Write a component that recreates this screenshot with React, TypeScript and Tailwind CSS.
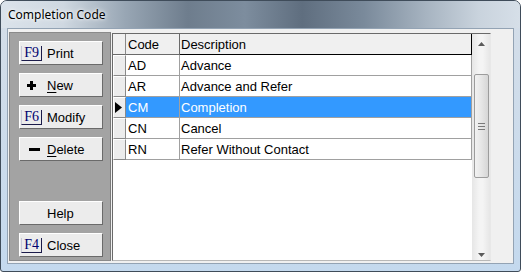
import React from 'react';

interface CodeRow {
  code: string;
  desc: string;
  selected?: boolean;
}

const rows: CodeRow[] = [
  { code: 'AD', desc: 'Advance' },
  { code: 'AR', desc: 'Advance and Refer' },
  { code: 'CM', desc: 'Completion', selected: true },
  { code: 'CN', desc: 'Cancel' },
  { code: 'RN', desc: 'Refer Without Contact' },
];

function KeyBox({ k }: { k: string }) {
  return (
    <span className="flex h-[15px] w-[21px] items-end justify-end border-r border-b border-l border-r-[#1b1b4a] border-b-[#1b1b4a] border-l-[#c8c8d8] pr-[2px] font-['Liberation_Serif',serif] text-[14px] leading-[14px] text-[#00006e]">
      {k}
    </span>
  );
}

function PanelButton({ icon, children, className = '' }: { icon?: React.ReactNode; children: React.ReactNode; className?: string }) {
  return (
    <div
      className={`flex h-[24px] w-[84px] items-center border border-t-white border-l-white border-r-[#6a6a6a] border-b-[#6a6a6a] bg-[#ececec] pl-[1px] ${className}`}
    >
      <div className="flex w-[26px] items-center">{icon}</div>
      <span className="text-[13px] leading-none text-black">{children}</span>
    </div>
  );
}

export default function App() {
  return (
    <div className="h-[273px] w-[522px] overflow-hidden bg-white font-['Liberation_Sans',Arial,sans-serif]">
      <div className="flex h-[272px] w-[521px] flex-col overflow-hidden rounded-t-[7px] rounded-b-[3px] border border-[#3f4c5a] bg-[linear-gradient(to_bottom,#d5dee8,#c4d9ee)]">
        {/* Title bar */}
        <div className="flex h-[27px] shrink-0 items-center bg-[linear-gradient(to_right,#dbe3eb_0%,#cfd8e1_12%,#98a6b4_24%,#6e7d8d_36%,#7d8d9e_47%,#5f6e7f_58%,#7a8a9b_70%,#a7b4c1_82%,#c9d3dd_92%,#d6dfe8_100%)] pl-[7px]">
          <span className="font-['Noto_Sans',sans-serif] text-[12px] leading-none text-black [text-shadow:0_0_6px_#ffffff,0_0_3px_#ffffff]">
            Completion Code
          </span>
        </div>

        {/* Frame + client */}
        <div className="flex flex-1 px-[6px] pb-[7px]">
          <div className="flex flex-1 border border-[#93a3b4] bg-[#f0f0f0] pl-[1px] pt-[3px]">
            {/* Left button panel */}
            <div className="flex h-[229px] w-[102px] flex-col gap-[8px] border border-t-[#8a8a8a] border-l-[#8a8a8a] border-r-[#7a7a7a] border-b-[#8a8a8a] bg-[#a3a3a3] pl-[9px] pt-[8px]">
              <PanelButton icon={<KeyBox k="F9" />}>Print</PanelButton>
              <PanelButton
                icon={
                  <svg width="9" height="9" viewBox="0 0 9 9" className="ml-[6px]">
                    <path d="M3 0h3v3h3v3h-3v3h-3v-3h-3v-3h3z" fill="#000" />
                  </svg>
                }
              >
                <span className="underline underline-offset-[2px]">N</span>ew
              </PanelButton>
              <PanelButton icon={<KeyBox k="F6" />}>Modify</PanelButton>
              <PanelButton icon={<span className="ml-[8px] block h-[3px] w-[11px] bg-black" />}>
                <span className="underline underline-offset-[2px]">D</span>elete
              </PanelButton>
              <PanelButton className="mt-[32px]">Help</PanelButton>
              <PanelButton icon={<KeyBox k="F4" />}>Close</PanelButton>
            </div>

            {/* Grid */}
            <div className="ml-[1px] mt-[1px] flex h-[228px] w-[379px] border border-t-[#6a6a6a] border-l-[#6a6a6a] border-r-[#e8e8e8] border-b-[#b8b8b8] bg-white">
              <div className="flex flex-1 flex-col">
                {/* Header */}
                <div className="flex h-[21px] text-[13px] leading-none text-black">
                  <div className="w-[13px] border-r border-b border-r-[#8a8a8a] border-b-[#6a6a6a] bg-[#f0f0f0]" />
                  <div className="flex w-[54px] items-center border-r border-b border-r-[#6a6a6a] border-b-[#6a6a6a] bg-[#f0f0f0] pl-[2px]">
                    Code
                  </div>
                  <div className="flex w-[292px] items-center border-r border-b border-black bg-[#f0f0f0] pl-[1px]">
                    Description
                  </div>
                </div>
                {/* Rows */}
                {rows.map((r) => (
                  <div key={r.code} className="flex h-[21px] text-[13px] leading-none">
                    <div className="flex w-[13px] items-center border border-t-white border-l-white border-r-[#8a8a8a] border-b-[#8a8a8a] bg-[#ececec] pl-[1px]">
                      {r.selected && (
                        <svg width="7" height="11" viewBox="0 0 7 11">
                          <path d="M0 0L7 5.5L0 11z" fill="#000" />
                        </svg>
                      )}
                    </div>
                    <div
                      className={`flex w-[54px] items-center border-r border-b border-[#a0a0a0] pl-[2px] ${
                        r.selected ? 'bg-[#3399ff] text-white' : 'text-black'
                      }`}
                    >
                      {r.code}
                    </div>
                    <div
                      className={`flex w-[292px] items-center border-r border-b border-[#a0a0a0] pl-[1px] ${
                        r.selected ? 'bg-[#3399ff] text-white' : 'text-black'
                      }`}
                    >
                      {r.desc}
                    </div>
                  </div>
                ))}
              </div>

              {/* Vertical scrollbar */}
              <div className="flex w-[18px] flex-col items-center bg-[linear-gradient(to_right,#e6e6e6,#f4f4f4_40%,#f4f4f4_60%,#e6e6e6)] pb-[3px] pl-[1px] pt-[8px]">
                <svg width="7" height="4" viewBox="0 0 7 4">
                  <path d="M3.5 0L7 4H0z" fill="#5a5a5a" />
                </svg>
                <div className="mt-[28px] flex h-[104px] w-[15px] items-center justify-center rounded-[2px] border border-[#9c9c9c] bg-[linear-gradient(to_right,#f2f2f2,#e6e6e6_50%,#d6d6d6)]">
                  <svg width="7" height="7" viewBox="0 0 7 7">
                    <path d="M0 0.5h7M0 3.5h7M0 6.5h7" stroke="#7a7a7a" strokeWidth="1" />
                  </svg>
                </div>
                <div className="flex-1" />
                <svg width="7" height="4" viewBox="0 0 7 4">
                  <path d="M0 0H7L3.5 4z" fill="#5a5a5a" />
                </svg>
              </div>
            </div>
          </div>
        </div>
      </div>
    </div>
  );
}
